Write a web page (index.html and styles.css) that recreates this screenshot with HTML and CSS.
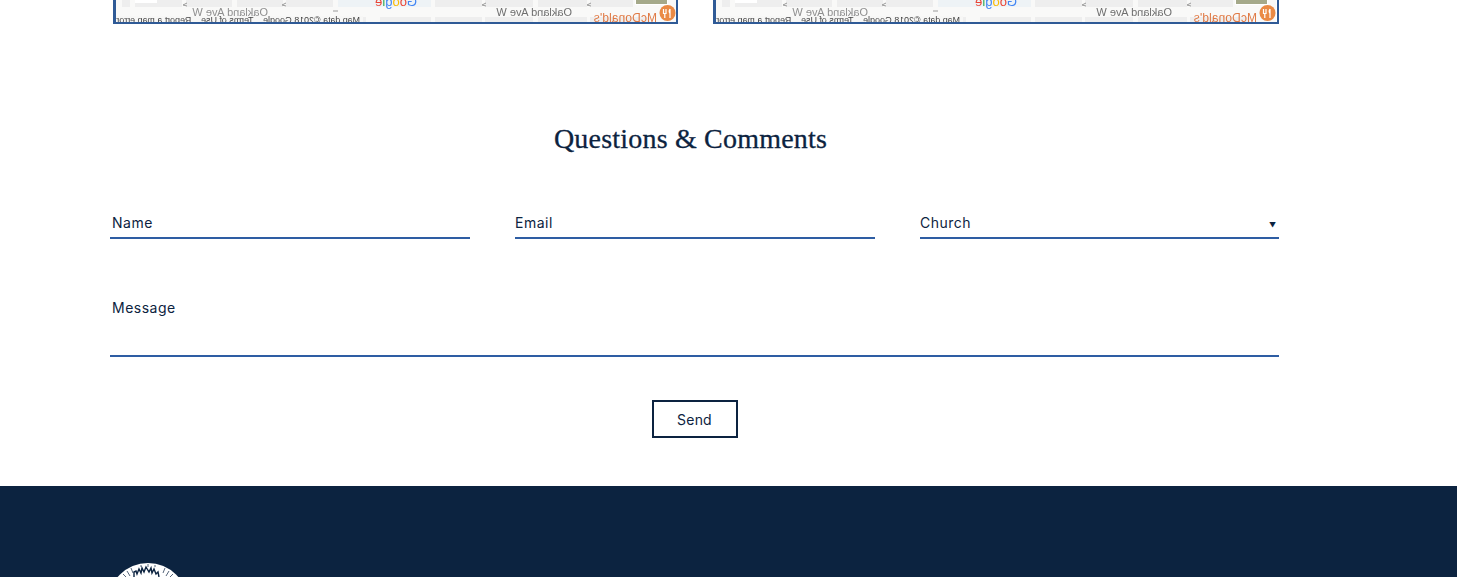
FILE: index.html
```html
<!DOCTYPE html>
<html lang="en">
<head>
  <meta charset="utf-8">
  <meta name="viewport" content="width=device-width, initial-scale=1">
  <title>Questions &amp; Comments</title>
  <link rel="stylesheet" href="styles.css">
</head>
<body>
  <svg class="defs" width="0" height="0">
    <symbol id="map-strip" viewBox="0 0 560 22">
      <rect width="560" height="22" fill="#f9f9f8"/>
      <g fill="#eeeeee">
        <rect x="6" y="0" width="8" height="7"/>
        <rect x="19" y="0" width="47" height="7"/>
        <rect x="70" y="0" width="46" height="7"/>
        <rect x="121" y="0" width="46" height="7"/>
        <rect x="170" y="0" width="47" height="7"/>
        <rect x="319" y="0" width="47" height="7"/>
        <rect x="369" y="0" width="48" height="7"/>
        <rect x="422" y="0" width="49" height="7"/>
        <rect x="474" y="0" width="43" height="7"/>
        <rect x="0" y="17" width="250" height="5"/>
        <rect x="264" y="17" width="51" height="5"/>
        <rect x="319" y="17" width="47" height="5"/>
        <rect x="369" y="17" width="48" height="5"/>
        <rect x="422" y="17" width="49" height="5"/>
        <rect x="474" y="17" width="60" height="5"/>
      </g>
      <rect x="0" y="16" width="247" height="6" fill="#f7f7f6"/>
      <rect x="222" y="0" width="93" height="7" fill="#eef3f6"/>
      <rect x="19" y="0" width="22" height="3" fill="#fff"/>
      <rect x="519" y="0" width="33" height="5" fill="#fff"/>
      <rect x="520" y="0" width="31" height="4" fill="#a5a98a"/>
      <g stroke="#9a9a9a" stroke-width="1" fill="none">
        <path d="M71 3l-4 2 4 1M170 3l-4 2 4 1M370 3l-4 2 4 1M475 3l-4 2 4 1M217 11h5"/>
      </g>
      <circle cx="551.5" cy="13" r="8" fill="#ea8a45"/>
      <path d="M547.5 9v4.5h2.5V9M548.8 13v5M554 9v9M554 9q-1.6 2 0 4.5" stroke="#fff" stroke-width="1.2" fill="none"/>
      <g transform="translate(560 0) scale(-1 1)">
        <text x="104" y="16" class="map-road">Oakland Ave W</text>
        <text x="408" y="16" class="map-road map-road-faint">Oakland Ave W</text>
        <text x="19" y="22" class="map-place">McDonald's</text>
        <text x="316" y="23" class="map-legal">Map data ©2018 Google    Terms of Use    Report a map error</text>
        <text x="259" y="6" class="map-logo"><tspan fill="#4285f4">G</tspan><tspan fill="#ea4335">o</tspan><tspan fill="#fbbc05">o</tspan><tspan fill="#4285f4">g</tspan><tspan fill="#34a853">l</tspan><tspan fill="#ea4335">e</tspan></text>
      </g>
    </symbol>
  </svg>

  <section class="maps">
    <div class="map-card"><svg class="map-img" width="560" height="22"><use href="#map-strip" width="560" height="22"/></svg></div>
    <div class="map-card"><svg class="map-img" width="560" height="22"><use href="#map-strip" width="560" height="22"/></svg></div>
  </section>

  <section class="contact">
    <h2 class="contact-title">Questions &amp; Comments</h2>
    <form class="contact-form">
      <div class="field-row">
        <div class="field">Name</div>
        <div class="field field-flush">Email</div>
        <div class="field field-flush">Church<span class="select-arrow">▼</span></div>
      </div>
      <div class="field field-message">Message</div>
      <div class="form-actions">
        <button type="button" class="btn-send">Send</button>
      </div>
    </form>
  </section>

  <footer class="site-footer">
    <svg class="footer-logo" width="70" height="14" viewBox="0 0 70 14">
      <circle cx="35" cy="40" r="40" fill="#fff"/>
      <g stroke="#0c2340" fill="none">
        <path d="M21 14V9l2-1 1 3 2-5 2 4 1-5 2 4 2-5 3 5 2-4 1 5 2-4 2 5 2-2 1 5" stroke-width="1.4"/>
        <path d="M14 8l3 5M10 11l3 3M56 8l-3 5M60 11l-3 3M18 5l2 5M52 5l-2 5M35 1v3M28 2v2M42 2v2" stroke-width=".7"/>
      </g>
    </svg>
  </footer>
</body>
</html>
```

FILE: styles.css
```css
* { box-sizing: border-box; }
body {
  margin: 0;
  background: #fff;
  color: #0c2340;
  font-family: "Inter", "Open Sans", sans-serif;
  font-size: 14px;
  height: 577px;
  overflow: hidden;
}
.defs { display: block; height: 0; }

.maps {
  display: grid;
  grid-template-columns: 565px 566px;
  gap: 35px;
  padding-left: 113px;
}
.map-card {
  height: 24px;
  border: solid #2f5a96;
  border-width: 0 2px 2px 3px;
  overflow: hidden;
}
.map-img { display: block; filter: blur(.45px); }
.map-road { font: 11px "Liberation Sans", sans-serif; fill: #6f6f6f; }
.map-road-faint { fill: #8f8f8f; }
.map-place { font: 12px "Liberation Sans", sans-serif; fill: #e07a45; letter-spacing: .1px; }
.map-legal { font: 8.9px "Liberation Sans", sans-serif; fill: #444; white-space: pre; }
.map-logo { font: 13px "Liberation Sans", sans-serif; }

.contact { padding: 0 178px 48px 110px; }
.contact-title {
  margin: 97px 8px 0 0;
  text-align: center;
  font-family: "Liberation Serif", serif;
  font-size: 28px;
  font-weight: 400;
  line-height: 36px;
  letter-spacing: .2px;
  -webkit-text-stroke: .3px #0c2340;
  color: #0c2340;
}
.contact-form { margin-top: 43px; }
.field-row {
  display: grid;
  grid-template-columns: 360px 360px 1fr;
  gap: 45px;
}
.field {
  height: 39px;
  padding: 14px 2px 0;
  border-bottom: 2px solid #2e5da3;
  line-height: 17px;
  letter-spacing: .5px;
  position: relative;
}
.field-flush { padding-left: 0; }
.select-arrow {
  position: absolute;
  right: 3px;
  top: 17px;
  font-size: 7px;
  letter-spacing: 0;
}
.field-message {
  height: 76px;
  margin-top: 42px;
  padding-top: 18px;
}
.form-actions {
  display: flex;
  justify-content: center;
  margin-top: 43px;
}
.btn-send {
  width: 86px;
  height: 38px;
  background: #fff;
  border: 2px solid #0c2340;
  color: #0c2340;
  font: 14px "Inter", sans-serif;
  letter-spacing: .2px;
  padding: 0;
}

.site-footer {
  background: #0c2340;
  height: 91px;
  padding: 77px 0 0 113px;
}
.footer-logo { display: block; }
```
